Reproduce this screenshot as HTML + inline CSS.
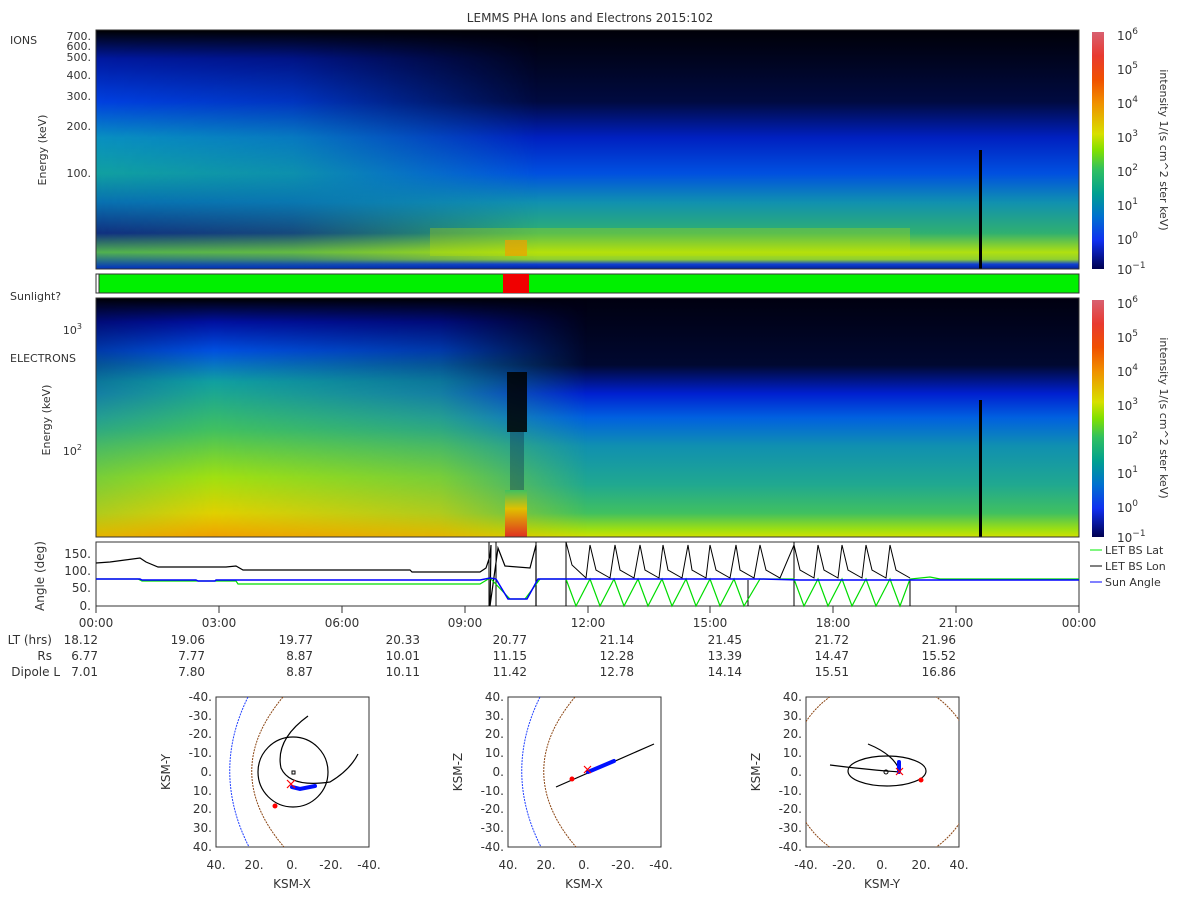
<!DOCTYPE html>
<html><head><meta charset="utf-8"><style>
body{margin:0;background:#fff;width:1200px;height:900px;overflow:hidden;font-family:"DejaVu Sans","Liberation Sans",sans-serif;}
svg text{font-family:"DejaVu Sans","Liberation Sans",sans-serif;fill:#333;}
</style></head><body>
<svg width="1200" height="900" viewBox="0 0 1200 900" xmlns="http://www.w3.org/2000/svg">
<defs>
<linearGradient id="cb" x1="0" y1="0" x2="0" y2="1">
<stop offset="0" stop-color="#d86070"/><stop offset="0.1" stop-color="#e83a30"/><stop offset="0.2" stop-color="#f05000"/><stop offset="0.3" stop-color="#f09000"/><stop offset="0.43" stop-color="#d8e000"/><stop offset="0.5" stop-color="#80e000"/><stop offset="0.58" stop-color="#30c060"/><stop offset="0.68" stop-color="#00a090"/><stop offset="0.78" stop-color="#0070d0"/><stop offset="0.88" stop-color="#1030f0"/><stop offset="1" stop-color="#000050"/>
</linearGradient>
<linearGradient id="ionR" x1="0" y1="0" x2="0" y2="1">
<stop offset="0" stop-color="#000008"/><stop offset="0.3" stop-color="#000a40"/><stop offset="0.45" stop-color="#0020c0"/><stop offset="0.6" stop-color="#0050e0"/><stop offset="0.72" stop-color="#1090b0"/><stop offset="0.85" stop-color="#30b070"/><stop offset="0.93" stop-color="#b0e010"/><stop offset="0.96" stop-color="#90d030"/><stop offset="0.98" stop-color="#1040d0"/><stop offset="1" stop-color="#0020a0"/>
</linearGradient>
<linearGradient id="ionL" x1="0" y1="0" x2="0" y2="1">
<stop offset="0" stop-color="#000"/><stop offset="0.12" stop-color="#0018a0"/><stop offset="0.3" stop-color="#0040e0"/><stop offset="0.45" stop-color="#0890c0"/><stop offset="0.6" stop-color="#10a0a0"/><stop offset="0.72" stop-color="#0870b0"/><stop offset="0.85" stop-color="#103080"/><stop offset="0.93" stop-color="#50b050"/><stop offset="1" stop-color="#0030c0"/>
</linearGradient>
<linearGradient id="hfade" x1="0" y1="0" x2="1" y2="0">
<stop offset="0" stop-color="#fff" stop-opacity="1"/><stop offset="0.2" stop-color="#fff" stop-opacity="0.8"/><stop offset="0.45" stop-color="#fff" stop-opacity="0"/>
</linearGradient>
<mask id="m1"><rect x="96" y="30" width="983" height="239" fill="url(#hfade)"/></mask>
<linearGradient id="eR" x1="0" y1="0" x2="0" y2="1">
<stop offset="0" stop-color="#000010"/><stop offset="0.28" stop-color="#000830"/><stop offset="0.4" stop-color="#0020d0"/><stop offset="0.5" stop-color="#0060e0"/><stop offset="0.62" stop-color="#1090b0"/><stop offset="0.78" stop-color="#20a890"/><stop offset="0.9" stop-color="#40c060"/><stop offset="0.97" stop-color="#a0e010"/><stop offset="1" stop-color="#d0e000"/>
</linearGradient>
<linearGradient id="eL" x1="0" y1="0" x2="0" y2="1">
<stop offset="0" stop-color="#000"/><stop offset="0.1" stop-color="#0010a0"/><stop offset="0.22" stop-color="#0050e0"/><stop offset="0.35" stop-color="#10a0a0"/><stop offset="0.55" stop-color="#40c060"/><stop offset="0.75" stop-color="#a0e010"/><stop offset="0.9" stop-color="#e0d000"/><stop offset="1" stop-color="#f0a000"/>
</linearGradient>
<linearGradient id="hfade2" x1="0" y1="0" x2="1" y2="0">
<stop offset="0" stop-color="#fff" stop-opacity="0.7"/><stop offset="0.12" stop-color="#fff" stop-opacity="1"/><stop offset="0.35" stop-color="#fff" stop-opacity="0.7"/><stop offset="0.5" stop-color="#fff" stop-opacity="0"/>
</linearGradient>
<mask id="m2"><rect x="96" y="298" width="983" height="239" fill="url(#hfade2)"/></mask>
<linearGradient id="red" x1="0" y1="0" x2="0" y2="1">
<stop offset="0" stop-color="#40c060"/><stop offset="0.4" stop-color="#e0c000"/><stop offset="1" stop-color="#e03020"/>
</linearGradient>
<clipPath id="c1"><rect x="216" y="697" width="153" height="150"/></clipPath>
<clipPath id="c2"><rect x="508" y="697" width="153" height="150"/></clipPath>
<clipPath id="c3"><rect x="806" y="697" width="153" height="150"/></clipPath>
</defs>

<text x="590" y="22" font-size="12" text-anchor="middle">LEMMS PHA Ions and Electrons  2015:102</text>

<!-- ION panel -->
<rect x="96" y="30" width="983" height="239" fill="url(#ionR)"/>
<rect x="96" y="30" width="983" height="239" fill="url(#ionL)" mask="url(#m1)"/>
<rect x="430" y="228" width="480" height="28" fill="#c0e000" opacity="0.3"/>
<rect x="505" y="240" width="22" height="16" fill="#f0a000" opacity="0.7"/>
<rect x="979" y="150" width="3" height="119" fill="#000"/>
<rect x="96" y="30" width="983" height="239" fill="none" stroke="#333"/>
<text x="10" y="44" font-size="11">IONS</text>
<g font-size="11" text-anchor="end">
<text x="91" y="40">700.</text><text x="91" y="50">600.</text><text x="91" y="61">500.</text><text x="91" y="79">400.</text><text x="91" y="100">300.</text><text x="91" y="130">200.</text><text x="91" y="177">100.</text>
</g>
<text transform="translate(46,150) rotate(-90)" font-size="11" text-anchor="middle">Energy (keV)</text>

<!-- sunlight -->
<rect x="96" y="274" width="983" height="19" fill="#00f000" stroke="#333"/>
<rect x="503" y="274" width="26" height="19" fill="#f00000"/>
<rect x="96" y="274" width="3" height="19" fill="#fff" stroke="#333"/>
<text x="10" y="300" font-size="11">Sunlight?</text>

<!-- ELECTRON panel -->
<rect x="96" y="298" width="983" height="239" fill="url(#eR)"/>
<rect x="96" y="298" width="983" height="239" fill="url(#eL)" mask="url(#m2)"/>
<rect x="507" y="372" width="20" height="60" fill="#000" opacity="0.85"/>
<rect x="510" y="432" width="14" height="58" fill="#103050" opacity="0.4"/>
<rect x="505" y="490" width="22" height="47" fill="url(#red)"/>
<rect x="979" y="400" width="3" height="137" fill="#000"/>
<rect x="96" y="298" width="983" height="239" fill="none" stroke="#333"/>
<text x="10" y="362" font-size="11">ELECTRONS</text>
<g font-size="11" text-anchor="end"><text x="82" y="334">10<tspan font-size="8" dy="-5">3</tspan></text><text x="82" y="455">10<tspan font-size="8" dy="-5">2</tspan></text></g>
<text transform="translate(50,420) rotate(-90)" font-size="11" text-anchor="middle">Energy (keV)</text>

<!-- colorbars -->
<g font-size="12">
<rect x="1092" y="32" width="12" height="237" fill="url(#cb)"/>
<text x="1117" y="40">10<tspan font-size="9" dy="-6">6</tspan></text>
<text x="1117" y="74">10<tspan font-size="9" dy="-6">5</tspan></text>
<text x="1117" y="108">10<tspan font-size="9" dy="-6">4</tspan></text>
<text x="1117" y="142">10<tspan font-size="9" dy="-6">3</tspan></text>
<text x="1117" y="176">10<tspan font-size="9" dy="-6">2</tspan></text>
<text x="1117" y="210">10<tspan font-size="9" dy="-6">1</tspan></text>
<text x="1117" y="244">10<tspan font-size="9" dy="-6">0</tspan></text>
<text x="1117" y="274">10<tspan font-size="9" dy="-6">−1</tspan></text>
<text transform="translate(1160,150) rotate(90)" font-size="11" text-anchor="middle">intensity 1/(s cm^2 ster keV)</text>
<rect x="1092" y="300" width="12" height="237" fill="url(#cb)"/>
<text x="1117" y="308">10<tspan font-size="9" dy="-6">6</tspan></text>
<text x="1117" y="342">10<tspan font-size="9" dy="-6">5</tspan></text>
<text x="1117" y="376">10<tspan font-size="9" dy="-6">4</tspan></text>
<text x="1117" y="410">10<tspan font-size="9" dy="-6">3</tspan></text>
<text x="1117" y="444">10<tspan font-size="9" dy="-6">2</tspan></text>
<text x="1117" y="478">10<tspan font-size="9" dy="-6">1</tspan></text>
<text x="1117" y="512">10<tspan font-size="9" dy="-6">0</tspan></text>
<text x="1117" y="542">10<tspan font-size="9" dy="-6">−1</tspan></text>
<text transform="translate(1160,418) rotate(90)" font-size="11" text-anchor="middle">intensity 1/(s cm^2 ster keV)</text>
</g>

<!-- Angle panel -->
<rect x="96" y="542" width="983" height="64" fill="#fff" stroke="#333"/>
<g font-size="12" text-anchor="end">
<text x="91" y="558">150.</text><text x="91" y="575">100.</text><text x="91" y="592">50.</text><text x="91" y="610">0.</text>
</g>
<text transform="translate(44,576) rotate(-90)" font-size="12" text-anchor="middle">Angle (deg)</text>
<polyline fill="none" stroke="#000" stroke-width="1.2" points="96,563 110,562 125,560 140,558 146,562 158,567 226,567 236,566 243,570 410,570 412,572 480,572 486,568 490,556 491,545 490,606 498,548 505,566 530,568 536,545 536,606 "/>
<polyline fill="none" stroke="#000" stroke-width="1" points="566,542 572,565 586,578 590,545 596,570 610,578 615,545 620,570 634,578 640,545 645,570 659,578 663,545 668,570 682,578 688,545 692,570 706,578 710,545 716,570 730,578 736,545 740,570 754,578 760,545 766,570 780,578 794,545 800,570 814,578 818,545 824,570 838,578 842,545 848,570 862,578 866,545 872,570 886,578 890,545 896,570 910,578"/>
<g stroke="#000" stroke-width="1"><line x1="489" y1="542" x2="489" y2="606"/><line x1="496" y1="542" x2="496" y2="606"/><line x1="566" y1="542" x2="566" y2="606"/><line x1="536" y1="542" x2="536" y2="606"/><line x1="794" y1="542" x2="794" y2="606"/><line x1="748" y1="580" x2="748" y2="606"/><line x1="910" y1="580" x2="910" y2="606"/></g>
<polyline fill="none" stroke="#00dd00" stroke-width="1.2" points="96,579 138,579 142,581 236,581 238,584 480,584 490,578 510,599 525,599 540,579 566,579 576,606 590,579 600,606 614,579 624,606 638,579 648,606 662,579 672,606 686,579 696,606 710,579 720,606 734,579 744,606 760,579 794,579 804,606 818,579 828,606 842,579 852,606 866,579 876,606 890,579 900,606 910,579 930,577 940,579 1079,579"/>
<polyline fill="none" stroke="#0000ff" stroke-width="1.5" points="96,579 140,579 142,580 196,580 198,581 215,581 216,580 480,580 490,578 496,579 508,599 527,599 538,579 760,579 800,580 1079,580"/>
<g stroke="#333"><line x1="96" y1="606" x2="96" y2="613"/><line x1="219" y1="606" x2="219" y2="613"/><line x1="342" y1="606" x2="342" y2="613"/><line x1="465" y1="606" x2="465" y2="613"/><line x1="588" y1="606" x2="588" y2="613"/><line x1="710" y1="606" x2="710" y2="613"/><line x1="833" y1="606" x2="833" y2="613"/><line x1="956" y1="606" x2="956" y2="613"/><line x1="1079" y1="606" x2="1079" y2="613"/></g>
<g font-size="11"><line x1="1090" y1="550" x2="1102" y2="550" stroke="#00ee00"/><text x="1105" y="554">LET BS Lat</text>
<line x1="1090" y1="566" x2="1102" y2="566" stroke="#000"/><text x="1105" y="570">LET BS Lon</text>
<line x1="1090" y1="582" x2="1102" y2="582" stroke="#00f"/><text x="1105" y="586">Sun Angle</text></g>

<!-- time labels -->
<g font-size="12" text-anchor="middle">
<text x="96" y="627">00:00</text><text x="219" y="627">03:00</text><text x="342" y="627">06:00</text><text x="465" y="627">09:00</text><text x="588" y="627">12:00</text><text x="710" y="627">15:00</text><text x="833" y="627">18:00</text><text x="956" y="627">21:00</text><text x="1079" y="627">00:00</text>
</g>
<g font-size="12" text-anchor="end">
<text x="52" y="644">LT (hrs)</text><text x="52" y="660">Rs</text><text x="60" y="676">Dipole L</text>
<text x="98" y="644">18.12</text><text x="205" y="644">19.06</text><text x="313" y="644">19.77</text><text x="420" y="644">20.33</text><text x="527" y="644">20.77</text><text x="634" y="644">21.14</text><text x="742" y="644">21.45</text><text x="849" y="644">21.72</text><text x="956" y="644">21.96</text>
<text x="98" y="660">6.77</text><text x="205" y="660">7.77</text><text x="313" y="660">8.87</text><text x="420" y="660">10.01</text><text x="527" y="660">11.15</text><text x="634" y="660">12.28</text><text x="742" y="660">13.39</text><text x="849" y="660">14.47</text><text x="956" y="660">15.52</text>
<text x="98" y="676">7.01</text><text x="205" y="676">7.80</text><text x="313" y="676">8.87</text><text x="420" y="676">10.11</text><text x="527" y="676">11.42</text><text x="634" y="676">12.78</text><text x="742" y="676">14.14</text><text x="849" y="676">15.51</text><text x="956" y="676">16.86</text>
</g>

<!-- small plot 1 -->
<g>
<rect x="216" y="697" width="153" height="150" fill="#fff" stroke="#333"/>
<g clip-path="url(#c1)">
<path d="M248,697 Q211,772 249,847" fill="none" stroke="#2040ff" stroke-dasharray="2,1"/>
<path d="M283,697 Q220,772 284,847" fill="none" stroke="#8b4513" stroke-dasharray="2,1"/>
<circle cx="293" cy="772" r="35" fill="none" stroke="#000" stroke-width="1.2"/>
<path d="M308,716 Q275,740 281,768 Q290,788 330,782 Q350,770 358,754" fill="none" stroke="#000" stroke-width="1.2"/>
<path d="M292,787 L300,789 L315,786" stroke="#0010ff" stroke-width="4" fill="none" stroke-linecap="round"/>
<path d="M287,780 l8,8 M295,780 l-8,8" stroke="#f00" stroke-width="1.2"/>
<circle cx="275" cy="806" r="2.5" fill="#f00"/>
<rect x="292" y="771" width="3" height="3" fill="none" stroke="#000"/>
</g>
<g font-size="12" text-anchor="end"><text x="212" y="701">-40.</text><text x="212" y="720">-30.</text><text x="212" y="738">-20.</text><text x="212" y="757">-10.</text><text x="212" y="776">0.</text><text x="212" y="795">10.</text><text x="212" y="813">20.</text><text x="212" y="832">30.</text><text x="212" y="851">40.</text></g>
<g font-size="12" text-anchor="middle"><text x="216" y="869">40.</text><text x="254" y="869">20.</text><text x="292" y="869">0.</text><text x="331" y="869">-20.</text><text x="369" y="869">-40.</text><text x="292" y="888">KSM-X</text></g>
<text transform="translate(170,772) rotate(-90)" font-size="12" text-anchor="middle">KSM-Y</text>
</g>
<!-- small plot 2 -->
<g>
<rect x="508" y="697" width="153" height="150" fill="#fff" stroke="#333"/>
<g clip-path="url(#c2)">
<path d="M540,697 Q503,772 541,847" fill="none" stroke="#2040ff" stroke-dasharray="2,1"/>
<path d="M575,697 Q512,772 576,847" fill="none" stroke="#8b4513" stroke-dasharray="2,1"/>
<line x1="556" y1="787" x2="654" y2="744" stroke="#000" stroke-width="1.2"/>
<line x1="588" y1="772" x2="614" y2="761" stroke="#0010ff" stroke-width="4" stroke-linecap="round"/>
<path d="M584,766 l7,7 M591,766 l-7,7" stroke="#f00" stroke-width="1.2"/>
<circle cx="572" cy="779" r="2.5" fill="#f00"/>
</g>
<g font-size="12" text-anchor="end"><text x="504" y="701">40.</text><text x="504" y="720">30.</text><text x="504" y="738">20.</text><text x="504" y="757">10.</text><text x="504" y="776">0.</text><text x="504" y="795">-10.</text><text x="504" y="813">-20.</text><text x="504" y="832">-30.</text><text x="504" y="851">-40.</text></g>
<g font-size="12" text-anchor="middle"><text x="508" y="869">40.</text><text x="546" y="869">20.</text><text x="584" y="869">0.</text><text x="623" y="869">-20.</text><text x="661" y="869">-40.</text><text x="584" y="888">KSM-X</text></g>
<text transform="translate(462,772) rotate(-90)" font-size="12" text-anchor="middle">KSM-Z</text>
</g>
<!-- small plot 3 -->
<g>
<rect x="806" y="697" width="153" height="150" fill="#fff" stroke="#333"/>
<g clip-path="url(#c3)">
<circle cx="883" cy="772" r="92" fill="none" stroke="#8b4513" stroke-dasharray="2,1"/>
<ellipse cx="887" cy="771" rx="39" ry="15" fill="none" stroke="#000" stroke-width="1.2"/>
<path d="M830,765 Q870,770 900,772 M868,744 Q895,755 900,772" fill="none" stroke="#000" stroke-width="1.2"/>
<line x1="899" y1="762" x2="899" y2="772" stroke="#0010ff" stroke-width="4" stroke-linecap="round"/>
<path d="M896,768 l7,7 M903,768 l-7,7" stroke="#f00" stroke-width="1.2"/>
<circle cx="921" cy="780" r="2.5" fill="#f00"/>
<circle cx="886" cy="772" r="2" fill="none" stroke="#000"/>
</g>
<g font-size="12" text-anchor="end"><text x="802" y="701">40.</text><text x="802" y="720">30.</text><text x="802" y="738">20.</text><text x="802" y="757">10.</text><text x="802" y="776">0.</text><text x="802" y="795">-10.</text><text x="802" y="813">-20.</text><text x="802" y="832">-30.</text><text x="802" y="851">-40.</text></g>
<g font-size="12" text-anchor="middle"><text x="806" y="869">-40.</text><text x="844" y="869">-20.</text><text x="882" y="869">0.</text><text x="921" y="869">20.</text><text x="959" y="869">40.</text><text x="882" y="888">KSM-Y</text></g>
<text transform="translate(760,772) rotate(-90)" font-size="12" text-anchor="middle">KSM-Z</text>
</g>
</svg>
</body></html>
